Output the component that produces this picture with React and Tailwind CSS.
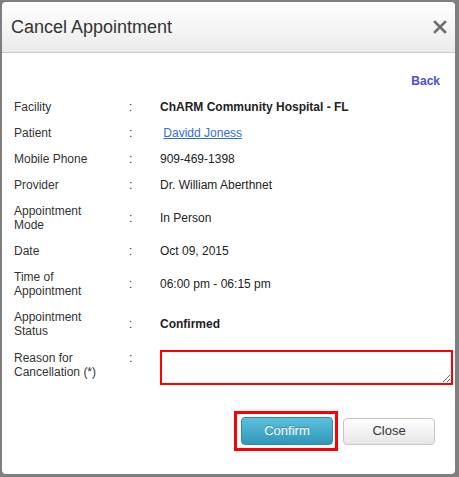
export default function App() {
  const rows = [
    { label: "Facility", value: <span className="font-bold">ChARM Community Hospital - FL</span> },
    { label: "Patient", value: <span>&nbsp;<a href="#" className="text-[#2f6fdc] underline">Davidd Joness</a></span> },
    { label: "Mobile Phone", value: "909-469-1398" },
    { label: "Provider", value: "Dr. William Aberthnet" },
    { label: "Appointment Mode", value: "In Person" },
    { label: "Date", value: "Oct 09, 2015" },
    { label: "Time of Appointment", value: "06:00 pm - 06:15 pm" },
    { label: "Appointment Status", value: <span className="font-bold">Confirmed</span> },
  ];
  return (
    <div
      className="w-[459px] h-[477px] bg-[#7f7f7f] pl-[2px] pt-[2px] overflow-hidden"
      style={{ fontFamily: '"Liberation Sans", Arial, sans-serif' }}
    >
      <div className="w-[453px] h-[472px] bg-white rounded-[4px] overflow-hidden flex flex-col">
        <div className="h-[51px] border-b border-[#c8c8c8] bg-gradient-to-b from-white to-[#ebebeb] flex items-center justify-between pl-[9px] pr-[8px] rounded-t-[4px]">
          <span className="text-[18px] text-[#333] leading-[20px]">Cancel Appointment</span>
          <svg width="14" height="14" viewBox="0 0 14 14">
            <path d="M2 2 L12 12 M12 2 L2 12" stroke="#6e6e6e" strokeWidth="2.6" strokeLinecap="square" />
          </svg>
        </div>
        <div className="pl-[12px] pt-[21px] text-[12px] leading-[14px] text-[#333]">
          <div className="flex justify-end pr-[15px]">
            <a href="#" className="font-bold text-[#4a4ae6]">Back</a>
          </div>
          <div className="mt-[6px] flex flex-col">
            {rows.map((r) => (
              <div key={r.label} className="flex items-center py-[6px]">
                <div className="w-[115px] shrink-0">
                  <div className="w-[95px]">{r.label}</div>
                </div>
                <div className="w-[31px] shrink-0">:</div>
                <div className="text-[#222]">{r.value}</div>
              </div>
            ))}
            <div className="flex items-start py-[6px]">
              <div className="w-[115px] shrink-0 pt-[1px]">
                <div className="w-[95px]">Reason for Cancellation (*)</div>
              </div>
              <div className="w-[31px] shrink-0 pt-[1px]">:</div>
              <textarea className="block w-[293px] h-[35px] border-2 border-[#ff0000] bg-white outline-none" />
            </div>
          </div>
          <div className="mt-[20px] flex justify-end items-center pr-[20px]">
            <div className="border-[3px] border-[#ff0000] pl-[4px] pr-[2px] py-[3px]">
              <button className="w-[92px] h-[28px] rounded-[4px] border border-[#2d8db0] bg-gradient-to-b from-[#5cc0de] to-[#3196b8] text-white text-[13px] [text-shadow:0_-1px_0_rgba(0,0,0,0.25)]">
                Confirm
              </button>
            </div>
            <button className="ml-[5px] w-[92px] h-[27px] rounded-[4px] border border-[#c6c6c6] bg-gradient-to-b from-white to-[#e6e6e6] text-[#333] text-[13px]">
              Close
            </button>
          </div>
        </div>
      </div>
    </div>
  );
}
